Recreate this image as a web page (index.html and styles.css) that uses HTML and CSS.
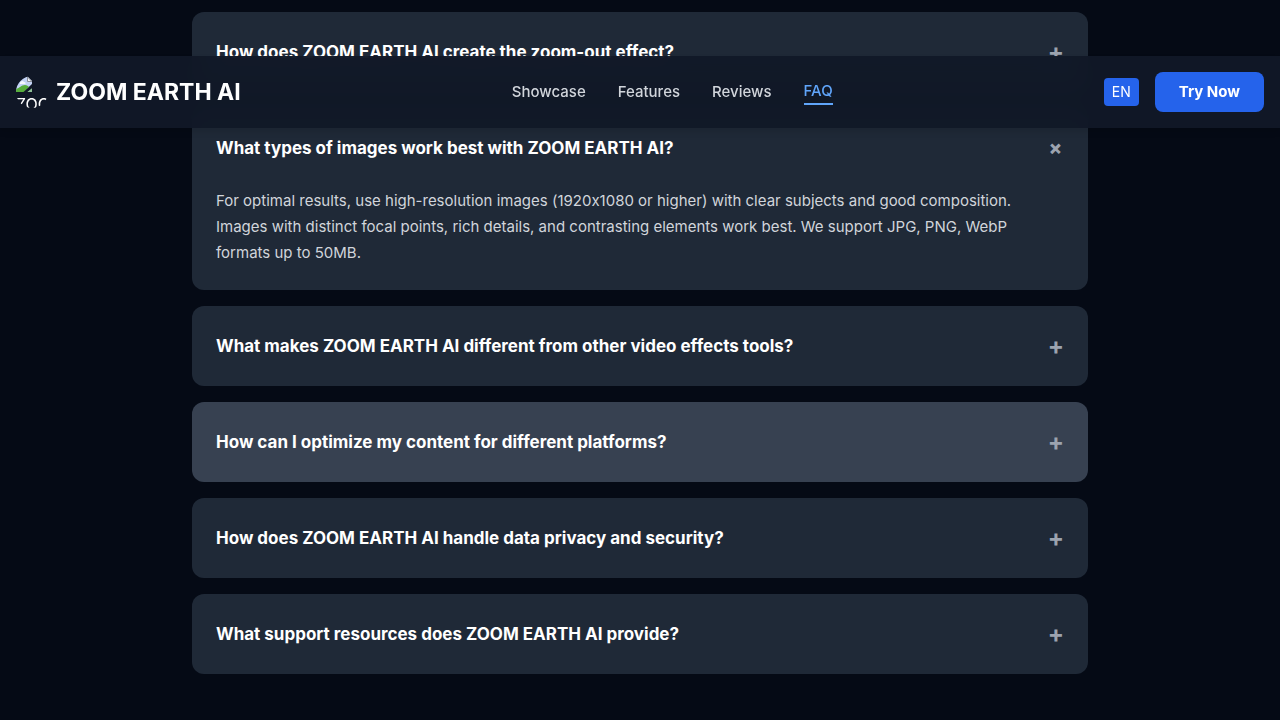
FILE: index.html
```html
<!DOCTYPE html>
<html lang="en">
<head>
<meta charset="utf-8">
<meta name="viewport" content="width=device-width, initial-scale=1">
<title>ZOOM EARTH AI - FAQ</title>
<link rel="stylesheet" href="styles.css">
</head>
<body>
<header class="header">
  <a class="brand" href="#">
    <span class="logo">
      <svg class="logo-icon" width="16" height="16" viewBox="0 0 16 16" aria-hidden="true">
        <path d="M0 0h11l5 5v3L8 16H0z" fill="#c3d3f5"/>
        <path d="M0 16v-3c4-1 5-4 9-4 2 0 3 1 4 2l-5 5z" fill="#57ad3c"/>
        <path d="M11.500 1v4.500H16z" fill="#f4f5f8" stroke="#8b8f98"/>
        <path d="M4 7c0-2 3-3 4-1 2 0 2 2 1 2H4z" fill="#f4f7ff"/>
        <path d="M16 12v4h-5z" fill="#8fbf97"/>
        <path d="M16 8.500V12l-5 4H7.500z" fill="#111827"/>
      </svg>
      <span class="logo-alt">ZOO</span>
    </span>
    <span class="brand-name">ZOOM EARTH AI</span>
  </a>
  <nav class="nav">
    <a class="nav-link" href="#showcase">Showcase</a>
    <a class="nav-link" href="#features">Features</a>
    <a class="nav-link" href="#reviews">Reviews</a>
    <a class="nav-link active" href="#faq">FAQ</a>
  </nav>
  <div class="actions">
    <button class="lang" type="button">EN</button>
    <button class="cta" type="button">Try Now</button>
  </div>
</header>
<main class="faq" id="faq">
  <section class="item">
    <button class="question" type="button"><span>How does ZOOM EARTH AI create the zoom-out effect?</span><span class="mark">+</span></button>
  </section>
  <section class="item">
    <button class="question" type="button" aria-expanded="true"><span>What types of images work best with ZOOM EARTH AI?</span><span class="mark open">+</span></button>
    <p class="answer">For optimal results, use high-resolution images (1920x1080 or higher) with clear subjects and good composition. Images with distinct focal points, rich details, and contrasting elements work best. We support JPG, PNG, WebP formats up to 50MB.</p>
  </section>
  <section class="item">
    <button class="question" type="button"><span>What makes ZOOM EARTH AI different from other video effects tools?</span><span class="mark">+</span></button>
  </section>
  <section class="item highlighted">
    <button class="question" type="button"><span>How can I optimize my content for different platforms?</span><span class="mark">+</span></button>
  </section>
  <section class="item">
    <button class="question" type="button"><span>How does ZOOM EARTH AI handle data privacy and security?</span><span class="mark">+</span></button>
  </section>
  <section class="item">
    <button class="question" type="button"><span>What support resources does ZOOM EARTH AI provide?</span><span class="mark">+</span></button>
  </section>
</main>
</body>
</html>
```
FILE: styles.css
```css
* {
  box-sizing: border-box;
}

body {
  margin: 0;
  background: #050a15;
  color: #fff;
  font-family: Inter, "Liberation Sans", sans-serif;
  font-size: 15px;
  line-height: 24px;
}

a {
  color: inherit;
  text-decoration: none;
}

button {
  border: 0;
  color: inherit;
  font: inherit;
  cursor: pointer;
}

.header {
  position: fixed;
  top: 56px;
  left: 0;
  right: 0;
  z-index: 10;
  display: flex;
  align-items: center;
  justify-content: space-between;
  padding: 16px;
  background: rgba(17, 24, 39, 0.95);
  backdrop-filter: blur(10px);
  box-shadow: 0 4px 6px rgba(0, 0, 0, 0.1);
}

.brand {
  display: flex;
  align-items: center;
  gap: 8px;
}

.logo {
  width: 32px;
  height: 32px;
  border-radius: 50%;
  overflow: hidden;
}

.logo-icon,
.logo-alt {
  display: block;
}

.logo-alt {
  font-size: 16px;
}

.brand-name {
  font-size: 23px;
  line-height: 32px;
  font-weight: 700;
}

.nav {
  display: flex;
  align-items: center;
  gap: 32px;
}

.nav-link {
  color: #d1d5db;
  font-weight: 500;
}

.nav-link.active {
  color: #60a5fa;
  border-bottom: 2px solid #60a5fa;
}

.actions {
  display: flex;
  align-items: center;
  gap: 16px;
}

.lang {
  padding: 4px 8px;
  border-radius: 4px;
  background: #2563eb;
  font-size: 14px;
  line-height: 20px;
}

.cta {
  padding: 8px 24px;
  border-radius: 8px;
  background: #2563eb;
  font-weight: 700;
}

.faq {
  display: flex;
  flex-direction: column;
  gap: 16px;
  max-width: 896px;
  margin: 0 auto;
  padding: 12px 0 46px;
}

.item {
  border-radius: 12px;
  background: #1f2937;
}

.item.highlighted {
  background: #374151;
}

.question {
  display: flex;
  align-items: center;
  justify-content: space-between;
  width: 100%;
  padding: 24px;
  background: transparent;
  font-size: 17px;
  line-height: 32px;
  font-weight: 700;
  text-align: left;
}

.mark {
  color: #9ca3af;
  font-size: 24px;
}

.mark.open {
  transform: rotate(45deg);
}

.answer {
  margin: 0;
  padding: 0 40px 24px 24px;
  color: #d1d5db;
  line-height: 26px;
  font-variant-ligatures: no-contextual;
}
```
